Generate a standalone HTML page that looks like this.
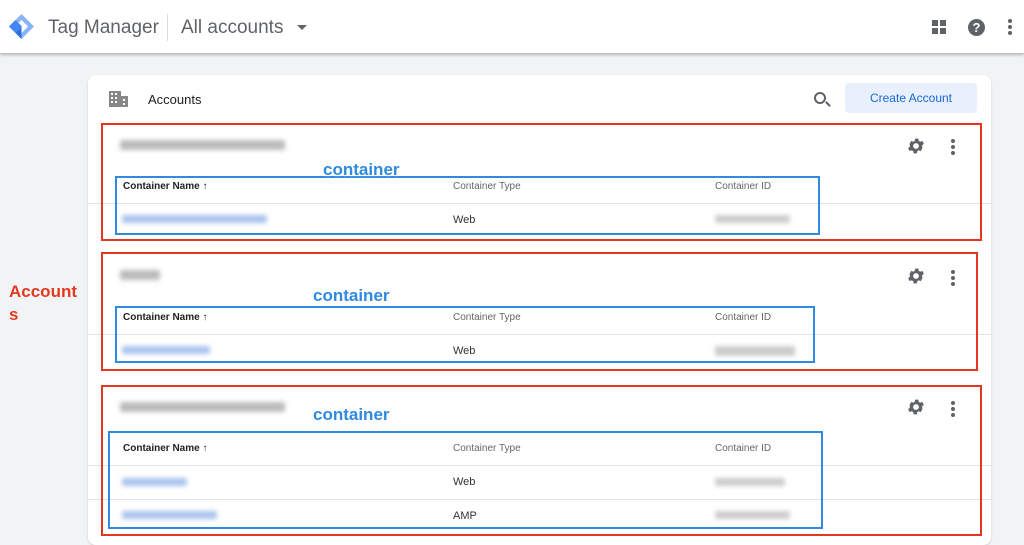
<!DOCTYPE html><html><head><style>
*{margin:0;padding:0;box-sizing:border-box}
body{width:1024px;height:540px;background:#f1f3f4;font-family:"Liberation Sans",sans-serif;position:relative;overflow:hidden;color:#202124}
.a{position:absolute}
.hdr{left:0;top:0;width:1024px;height:53px;background:#fff;box-shadow:0 2px 3px rgba(0,0,0,.25)}
.card{left:88px;top:75px;width:903px;height:470px;background:#fff;border-radius:8px;box-shadow:0 1px 2px rgba(0,0,0,.15)}
.red{border:2px solid #e3381f}
.blue{border:2px solid #2f8ae0}
.th{font-size:10px;color:#666}
.thb{font-size:10px;color:#222;font-weight:bold}
.td{font-size:11px;color:#333}
.line{height:1px;background:#e3e3e3}
.blur{filter:blur(2.5px);border-radius:2px}
.lbl{color:#2f8ae0;font-weight:bold;font-size:17px;text-shadow:0 0 2px #fff,0 0 2px #fff}
.dots{width:4px}
.dots i{display:block;width:4px;height:4px;border-radius:50%;background:#5f6368;margin-bottom:2px}
</style></head><body>
<div class="a hdr"></div>
<svg class="a" style="left:8px;top:13px" width="27" height="27" viewBox="0 0 27 27"><path d="M13.5 1L26 13.5 13.5 26 1 13.5z" fill="#8ab4f8"/><path d="M13.5 7L20 13.5 13.5 20 7 13.5z" fill="#fff"/><path d="M1 13.5L7.5 7 14 13.5 7.5 20z" fill="#4285f4"/><path d="M7.5 20L13.5 14 13.5 26z" fill="#2a6fd6"/></svg>
<div class="a" style="left:48px;top:17px;font-size:19px;color:#5f6368">Tag Manager</div>
<div class="a" style="left:167px;top:14px;width:1px;height:27px;background:#ddd"></div>
<div class="a" style="left:181px;top:17px;font-size:19px;color:#5f6368">All accounts</div>
<div class="a" style="left:297px;top:25px;border:5px solid transparent;border-top-color:#5f6368;border-bottom:0"></div>
<div class="a" style="left:932px;top:20px;width:6px;height:6px;background:#5f6368;box-shadow:8px 0 #5f6368,0 8px #5f6368,8px 8px #5f6368"></div>
<div class="a" style="left:968px;top:19px;width:17px;height:17px;border-radius:50%;background:#5f6368;color:#fff;font-size:13px;font-weight:bold;text-align:center;line-height:17px">?</div>
<div class="a dots" style="left:1008px;top:19px"><i></i><i></i><i></i></div>
<div class="a card"></div>
<svg class="a" style="left:109px;top:91px" width="19" height="16" viewBox="0 0 19 16" fill="#888"><path d="M0 0h12v16H0z M12 5h7v11h-7z"/><g fill="#fff"><rect x="2" y="2" width="2" height="2"/><rect x="6" y="2" width="2" height="2"/><rect x="2" y="6" width="2" height="2"/><rect x="6" y="6" width="2" height="2"/><rect x="2" y="10" width="2" height="2"/><rect x="6" y="10" width="2" height="2"/><rect x="14" y="8" width="2" height="2"/><rect x="14" y="12" width="2" height="2"/></g></svg>
<div class="a" style="left:148px;top:92px;font-size:13px">Accounts</div>
<div class="a" style="left:814px;top:92px;width:12px;height:12px;border:2px solid #5f6368;border-radius:50%"></div>
<div class="a" style="left:825px;top:103px;width:6px;height:2px;background:#5f6368;transform:rotate(45deg)"></div>
<div class="a" style="left:845px;top:83px;width:132px;height:30px;background:#e8f0fe;border-radius:4px;color:#1967d2;font-size:12px;text-align:center;line-height:30px">Create Account</div>
<svg width="0" height="0" style="position:absolute"><defs><symbol id="g" viewBox="0 0 24 24"><path fill="#5f6368" d="M19.4 13a7.5 7.5 0 000-2l2.1-1.6-2-3.5-2.5 1a7 7 0 00-1.7-1l-.4-2.7h-4l-.4 2.7a7 7 0 00-1.7 1l-2.5-1-2 3.5L4.6 11a7.5 7.5 0 000 2l-2.1 1.6 2 3.5 2.5-1a7 7 0 001.7 1l.4 2.7h4l.4-2.7a7 7 0 001.7-1l2.5 1 2-3.5zM12 15.5a3.5 3.5 0 110-7 3.5 3.5 0 010 7z"/></symbol></defs></svg>
<!-- section 1 -->
<div class="a line" style="left:88px;top:203px;width:903px"></div>
<div class="a blur" style="left:120px;top:140px;width:165px;height:10px;background:#bbb"></div>
<svg class="a" style="left:906px;top:136px" width="20" height="20"><use href="#g"/></svg>
<div class="a dots" style="left:951px;top:139px"><i></i><i></i><i></i></div>
<div class="a thb" style="left:123px;top:181px">Container Name ↑</div>
<div class="a th" style="left:453px;top:181px">Container Type</div>
<div class="a th" style="left:715px;top:181px">Container ID</div>
<div class="a blur" style="left:122px;top:215px;width:145px;height:8px;background:#a9c4ee"></div>
<div class="a td" style="left:453px;top:214px">Web</div>
<div class="a blur" style="left:715px;top:215px;width:75px;height:8px;background:#ccc"></div>
<!-- section 2 -->
<div class="a line" style="left:88px;top:334px;width:903px"></div>
<div class="a blur" style="left:120px;top:270px;width:40px;height:10px;background:#bbb"></div>
<svg class="a" style="left:906px;top:266px" width="20" height="20"><use href="#g"/></svg>
<div class="a dots" style="left:951px;top:270px"><i></i><i></i><i></i></div>
<div class="a thb" style="left:123px;top:312px">Container Name ↑</div>
<div class="a th" style="left:453px;top:312px">Container Type</div>
<div class="a th" style="left:715px;top:312px">Container ID</div>
<div class="a blur" style="left:122px;top:346px;width:88px;height:8px;background:#a9c4ee"></div>
<div class="a td" style="left:453px;top:345px">Web</div>
<div class="a blur" style="left:715px;top:346px;width:80px;height:10px;background:#ccc"></div>
<!-- section 3 -->
<div class="a line" style="left:88px;top:465px;width:903px"></div>
<div class="a line" style="left:88px;top:499px;width:903px"></div>
<div class="a blur" style="left:120px;top:402px;width:165px;height:10px;background:#bbb"></div>
<svg class="a" style="left:906px;top:397px" width="20" height="20"><use href="#g"/></svg>
<div class="a dots" style="left:951px;top:401px"><i></i><i></i><i></i></div>
<div class="a thb" style="left:123px;top:443px">Container Name ↑</div>
<div class="a th" style="left:453px;top:443px">Container Type</div>
<div class="a th" style="left:715px;top:443px">Container ID</div>
<div class="a blur" style="left:122px;top:478px;width:65px;height:8px;background:#a9c4ee"></div>
<div class="a td" style="left:453px;top:476px">Web</div>
<div class="a blur" style="left:715px;top:478px;width:70px;height:8px;background:#ccc"></div>
<div class="a blur" style="left:122px;top:511px;width:95px;height:8px;background:#a9c4ee"></div>
<div class="a td" style="left:453px;top:510px">AMP</div>
<div class="a blur" style="left:715px;top:511px;width:75px;height:8px;background:#ccc"></div>
<!-- annotations -->
<div class="a red" style="left:101px;top:123px;width:881px;height:118px"></div>
<div class="a red" style="left:101px;top:252px;width:877px;height:119px"></div>
<div class="a red" style="left:101px;top:385px;width:881px;height:151px"></div>
<div class="a blue" style="left:115px;top:176px;width:705px;height:59px"></div>
<div class="a blue" style="left:115px;top:306px;width:700px;height:57px"></div>
<div class="a blue" style="left:108px;top:431px;width:715px;height:98px"></div>
<div class="a lbl" style="left:323px;top:160px">container</div>
<div class="a lbl" style="left:313px;top:286px">container</div>
<div class="a lbl" style="left:313px;top:405px">container</div>
<div class="a" style="left:9px;top:280px;color:#e3381f;font-weight:bold;font-size:17px;line-height:23px;text-shadow:0 0 2px #fff">Account<br>s</div>
</body></html>
